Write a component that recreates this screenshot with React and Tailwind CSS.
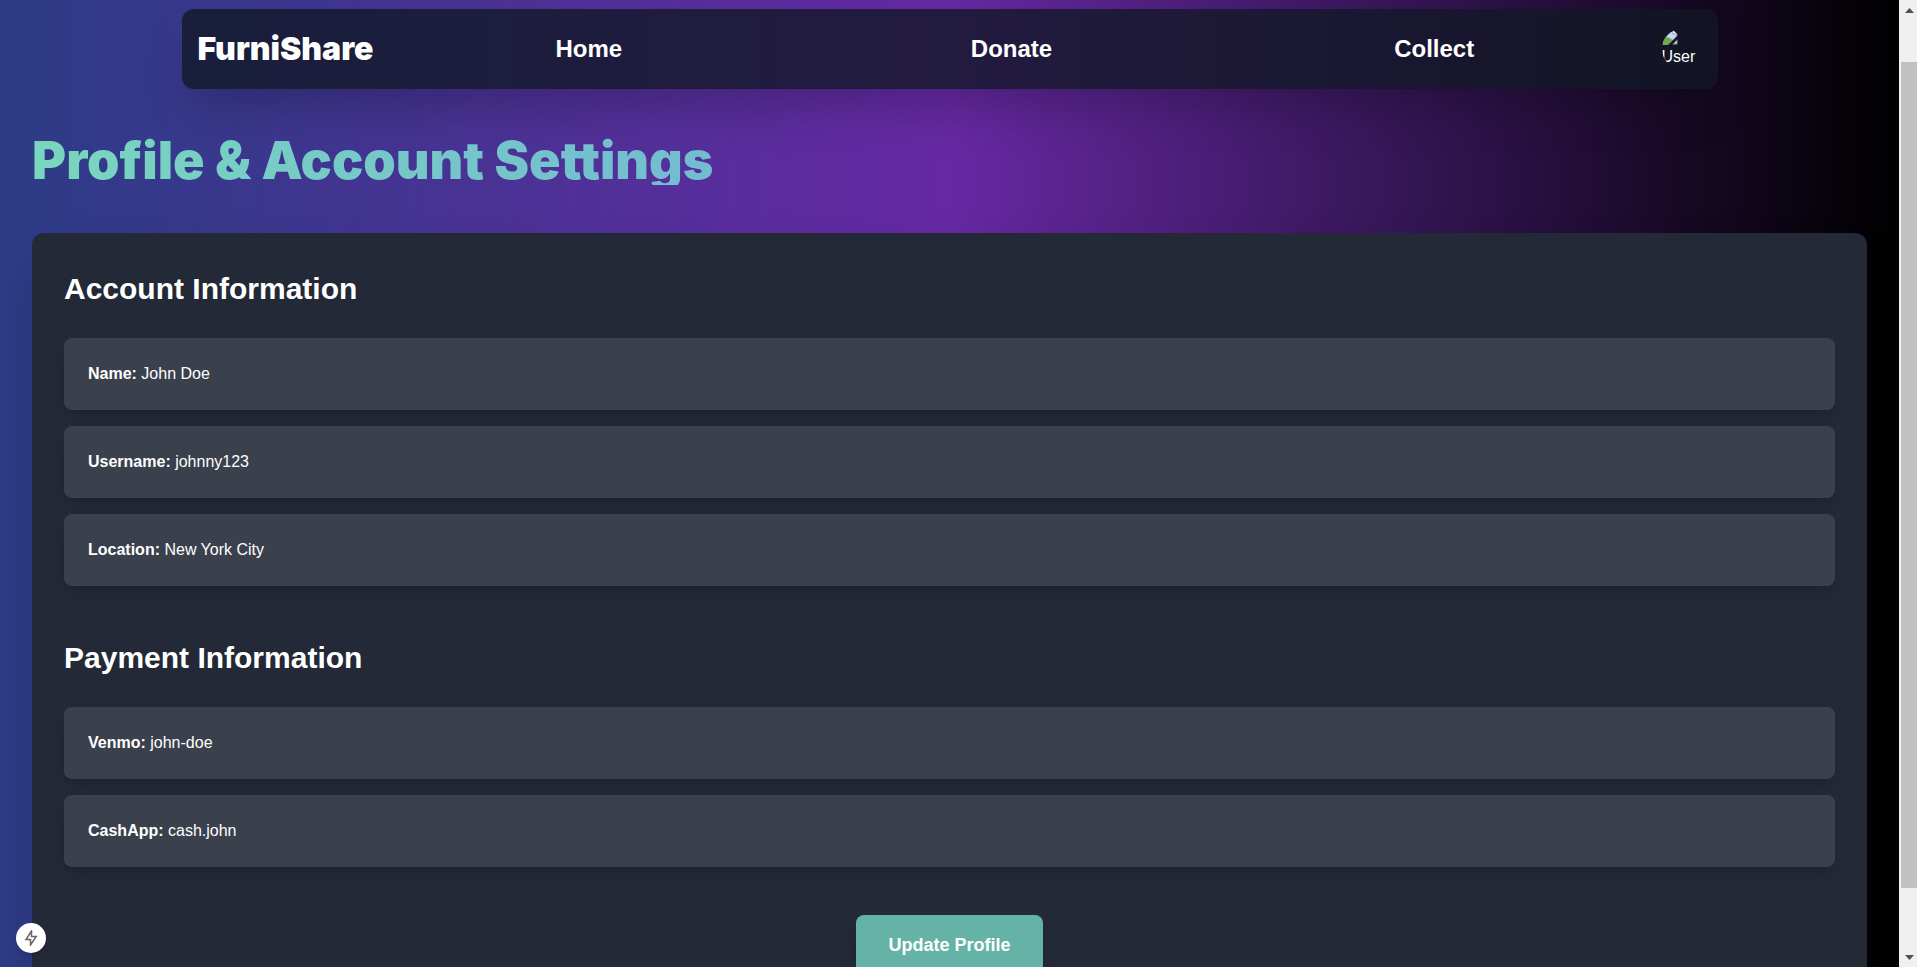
const navLinks = ['Home', 'Donate', 'Collect'];

const sections = [
    {
        title: 'Account Information',
        rows: [
            { label: 'Name', value: 'John Doe' },
            { label: 'Username', value: 'johnny123' },
            { label: 'Location', value: 'New York City' },
        ],
    },
    {
        title: 'Payment Information',
        rows: [
            { label: 'Venmo', value: 'john-doe' },
            { label: 'CashApp', value: 'cash.john' },
        ],
    },
];

function Avatar() {
    return (
        <button type="button" className="w-10 h-10 rounded-full overflow-hidden flex flex-col items-start gap-0.5">
            <svg viewBox="0 0 16 16" className="w-4 h-4 flex-shrink-0" aria-hidden="true">
                <path d="M1 1h10l4 4v10H1z" fill="#c7d6f5" stroke="#9a9a9a" />
                <path d="M11 1v4h4z" fill="#ffffff" stroke="#9a9a9a" />
                <path d="M0 16V12c2-4 6-5 9-2l2 1-5 5z" fill="#6cab4c" />
                <path d="M6 16L16 6v4l-6 6z" fill="#171826" />
            </svg>
            <span className="text-base leading-5">User</span>
        </button>
    );
}

function Navbar() {
    return (
        <nav className="w-full max-w-[1536px] mx-auto p-4 h-20 flex items-center bg-[#111827]/80 rounded-xl shadow-2xl">
            <a href="#" className="w-[180px] text-[32px] leading-10 font-black font-[Inter,sans-serif]">
                FurniShare
            </a>
            <ul className="flex flex-1 mr-4">
                {navLinks.map((link) => (
                    <li key={link} className="flex-1 text-center">
                        <a href="#" className="text-2xl font-bold">{link}</a>
                    </li>
                ))}
            </ul>
            <Avatar />
        </nav>
    );
}

function InfoSection({ title, rows }) {
    return (
        <section className="mb-12">
            <h2 className="text-3xl leading-12 font-bold mb-[25px]">{title}</h2>
            <div className="flex flex-col gap-4">
                {rows.map((row) => (
                    <p key={row.label} className="bg-[#3b404d] rounded-lg p-6 shadow-lg">
                        <strong>{row.label}:</strong> {row.value}
                    </p>
                ))}
            </div>
        </section>
    );
}

function Scrollbar() {
    return (
        <div className="w-[18px] flex-shrink-0 bg-[#f0f0f0] pl-0.5 flex flex-col" aria-hidden="true">
            <svg viewBox="0 0 16 17" className="w-4 h-[17px]">
                <path d="M4 13h9L8.500 8z" fill="#505050" />
            </svg>
            <div className="grow-45" />
            <div className="grow-826 bg-[#c1c1c1]" />
            <div className="grow-62" />
            <svg viewBox="0 0 16 17" className="w-4 h-[17px]">
                <path d="M4 5h9L8.500 10z" fill="#505050" />
            </svg>
        </div>
    );
}

export default function App() {
    return (
        <div className="h-screen flex overflow-hidden text-white font-['Liberation_Sans',Arial,sans-serif]">
            <div className="flex-1 overflow-hidden pt-[9px] bg-linear-to-r/srgb from-[#2c3c86] via-[#6629a3] to-black">
                <Navbar />
                <main className="px-8 pt-12">
                    <h1 className="text-[52px] leading-12 font-black font-[Inter,sans-serif] mb-12 text-transparent bg-clip-text bg-linear-to-r/srgb from-[#79d6be] to-[#6790f0]">
                        Profile &amp; Account Settings
                    </h1>
                    <div className="bg-[#232936] rounded-xl p-8 shadow-2xl">
                        {sections.map((section) => (
                            <InfoSection key={section.title} {...section} />
                        ))}
                        <div className="text-center">
                            <button type="button" className="bg-[#65b3a6] rounded-lg px-8 py-4 text-lg leading-7 font-bold shadow-lg">
                                Update Profile
                            </button>
                        </div>
                    </div>
                </main>
            </div>
            <Scrollbar />

            {/* Dev indicator */}
            <button type="button" aria-label="Static route" className="fixed left-4 bottom-3.5 w-[30px] h-[30px] rounded-full bg-white shadow-md flex items-center justify-center">
                <svg viewBox="0 0 16 16" className="w-4 h-4" fill="none" stroke="#666666" strokeWidth="1.500" aria-hidden="true">
                    <path d="M8.500 1L3 9.500h4.500V15L13.200 6.500H8.500z" />
                </svg>
            </button>
        </div>
    );
}
